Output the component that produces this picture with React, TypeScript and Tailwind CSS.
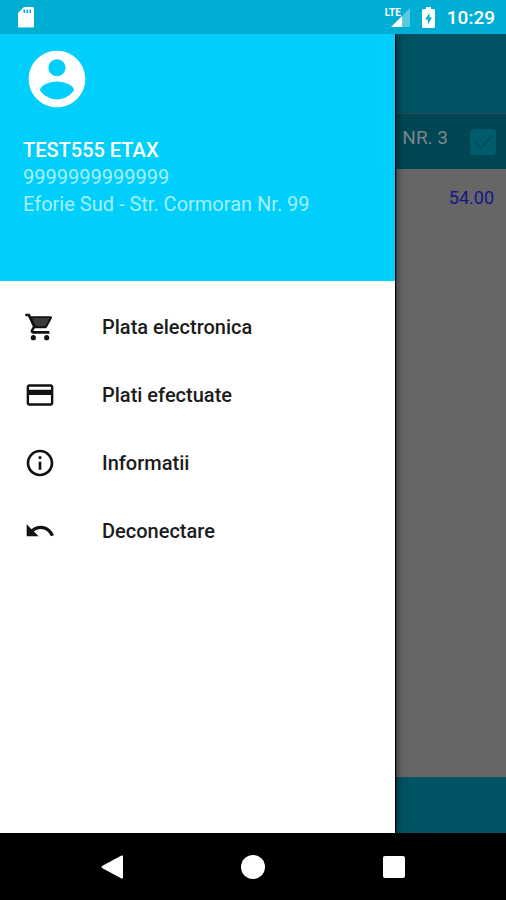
import type { ReactNode } from "react";

interface MenuItem {
  label: string;
  icon: ReactNode;
}

const MENU: MenuItem[] = [
  {
    label: "Plata electronica",
    icon: (
      <>
        <path fill="#3a3a3a" d="M6 5h14.5l-3.8 7H9.2z" />
        <path d="M7 18c-1.1 0-1.99.9-1.99 2S5.9 22 7 22s2-.9 2-2-.9-2-2-2zM17 18c-1.1 0-1.99.9-1.99 2s.89 2 1.99 2 2-.9 2-2-.9-2-2-2z" />
        <path
          fillRule="evenodd"
          d="M1 2v2h2l3.6 7.59-1.35 2.45c-.16.28-.25.61-.25.96 0 1.1.9 2 2 2h12v-2H7.42c-.14 0-.25-.11-.25-.25l.03-.12.9-1.63h7.45c.75 0 1.41-.41 1.75-1.03l3.58-6.49A1 1 0 0 0 20 4H5.21l-.94-2H1zM6.3 5.3h13.1l-3.4 6.2H9.2z"
        />
      </>
    ),
  },
  {
    label: "Plati efectuate",
    icon: (
      <path d="M20 4H4c-1.11 0-1.99.89-1.99 2L2 18c0 1.11.89 2 2 2h16c1.11 0 2-.89 2-2V6c0-1.11-.89-2-2-2zm.2 14.2H3.8V12h16.400v6.200zm0-10.200H3.800V5.800h16.400V8z" />
    ),
  },
  {
    label: "Informatii",
    icon: (
      <path d="M11 17h2v-6h-2v6zm1-15C6.48 2 2 6.48 2 12s4.48 10 10 10 10-4.48 10-10S17.52 2 12 2zm0 18c-4.41 0-8-3.59-8-8s3.59-8 8-8 8 3.59 8 8-3.59 8-8 8zM11 9h2V7h-2v2z" />
    ),
  },
  {
    label: "Deconectare",
    icon: (
      <path d="M12.5 8c-2.65 0-5.05.99-6.9 2.6L2 7v9h9l-3.62-3.62c1.39-1.16 3.16-1.88 5.12-1.88 3.54 0 6.55 2.31 7.6 5.5l2.37-.78C21.08 11.03 17.15 8 12.5 8z" />
    ),
  },
];

function StatusBar() {
  return (
    <header className="flex h-[34px] shrink-0 items-center justify-between bg-[#00aed3] pr-[11px] pl-[18px] text-white">
      {/* SD card */}
      <svg className="h-[21px] w-4" viewBox="0 0 16 21" fill="currentColor" aria-hidden="true">
        <path
          fillRule="evenodd"
          d="M6 0h8.5A1.5 1.5 0 0 1 16 1.5v17.5a1.5 1.5 0 0 1-1.5 1.5h-13A1.5 1.5 0 0 1 0 19V6zM5.500 2.500v3.500h1.500v-3.500zM8.500 2.500v3.500h1.500v-3.500zM11.500 2.500v3.500h1.500v-3.500z"
        />
      </svg>
      <div className="flex items-center">
        <div className="flex items-start">
          <span className="-mr-[11px] text-[10px] leading-[12px] font-bold">LTE</span>
          <svg className="h-5 w-5" viewBox="0 0 20 20" fill="currentColor" aria-hidden="true">
            <path opacity="0.35" d="M20 1v19h-8V9z" />
            <path d="M12 9v11H1z" />
          </svg>
        </div>
        {/* Charging battery */}
        <svg className="ml-3 h-[21px] w-[13px]" viewBox="0 0 13 21" fill="currentColor" aria-hidden="true">
          <path
            fillRule="evenodd"
            d="M4 0h5v2h2.5A1.5 1.5 0 0 1 13 3.5v16a1.5 1.5 0 0 1-1.5 1.5h-10A1.5 1.5 0 0 1 0 19.5v-16A1.5 1.5 0 0 1 1.5 2H4zM7.5 6L3 12.5h2.8V17.5L10 10.5H7.5z"
          />
        </svg>
        <time className="ml-3 pt-0.5 text-[19px] leading-6 font-medium">10:29</time>
      </div>
    </header>
  );
}

// The invoice list, dimmed while the drawer is open
function DimmedPage() {
  return (
    <main className="flex grow flex-col bg-[#666]">
      <div className="h-[79px] bg-[#005364]" />
      <label className="flex h-14 items-center justify-end gap-[22px] border-t border-[#2b4a52] bg-[#004655] pr-[10px]">
        <span className="pb-2 text-[19px] leading-6 text-[#7d8688]">NR. 3</span>
        <span className="relative size-[26px]">
          <input type="checkbox" defaultChecked className="size-[26px] appearance-none rounded-sm bg-[#005b6c]" />
          <svg
            className="pointer-events-none absolute inset-0 size-[26px]"
            viewBox="0 0 26 26"
            fill="none"
            stroke="#004d5c"
            strokeWidth="2"
            aria-hidden="true"
          >
            <path d="M5 13l6 6L22 7" />
          </svg>
        </span>
      </label>
      <p className="pt-[17px] pr-3 text-right text-[18px] leading-6 text-[#15158a]">54.00</p>
      <div className="mt-auto h-14 bg-[#005364]" />
    </main>
  );
}

function Drawer() {
  return (
    <aside className="absolute inset-y-0 left-0 flex w-[78%] flex-col bg-white shadow-[1px_0_1px_#000,3px_0_8px_rgba(0,0,0,0.4)]">
      <div className="h-[247px] bg-[#00cffb] px-[23px] pt-[11px] text-[20px] leading-[27px] text-[#a6efff]">
        <svg className="size-[68px]" viewBox="0 0 24 24" fill="#fff" aria-hidden="true">
          <path d="M12 2C6.48 2 2 6.48 2 12s4.48 10 10 10 10-4.48 10-10S17.52 2 12 2zm0 3c1.66 0 3 1.34 3 3s-1.34 3-3 3-3-1.34-3-3 1.34-3 3-3zm0 14.2c-2.5 0-4.71-1.28-6-3.22.03-1.99 4-3.08 6-3.08 1.99 0 5.97 1.09 6 3.08-1.29 1.94-3.5 3.22-6 3.22z" />
        </svg>
        <p className="mt-6 font-medium text-white">TEST555 ETAX</p>
        <p>9999999999999</p>
        <p>Eforie Sud - Str. Cormoran Nr. 99</p>
      </div>
      <nav className="pt-3">
        {MENU.map((item) => (
          <button
            key={item.label}
            type="button"
            className="flex h-[68px] w-full items-center gap-[46px] px-6 text-left text-[20px] leading-6 font-medium text-[#1c1c1c]"
          >
            <svg className="size-8 shrink-0 text-[#111]" viewBox="0 0 24 24" fill="currentColor" aria-hidden="true">
              {item.icon}
            </svg>
            {item.label}
          </button>
        ))}
      </nav>
    </aside>
  );
}

function NavigationBar() {
  return (
    <footer className="grid h-[67px] shrink-0 grid-cols-3 bg-black px-[42px] text-white">
      <button type="button" aria-label="Back" className="flex items-center justify-center">
        <svg className="size-6" viewBox="0 0 24 24" fill="currentColor" aria-hidden="true">
          <path d="M21.5.5Q23 0 23 1.5v21q0 1.5-1.5 1L2 13Q1 12 2 11z" />
        </svg>
      </button>
      <button type="button" aria-label="Home" className="flex items-center justify-center">
        <span className="size-6 rounded-full bg-white" />
      </button>
      <button type="button" aria-label="Recent apps" className="flex items-center justify-center">
        <span className="size-[22px] rounded-xs bg-white" />
      </button>
    </footer>
  );
}

export default function App() {
  return (
    <div className="flex min-h-screen flex-col font-[Roboto,sans-serif]">
      <StatusBar />
      <div className="relative flex grow flex-col overflow-hidden">
        <DimmedPage />
        <Drawer />
      </div>
      <NavigationBar />
    </div>
  );
}
